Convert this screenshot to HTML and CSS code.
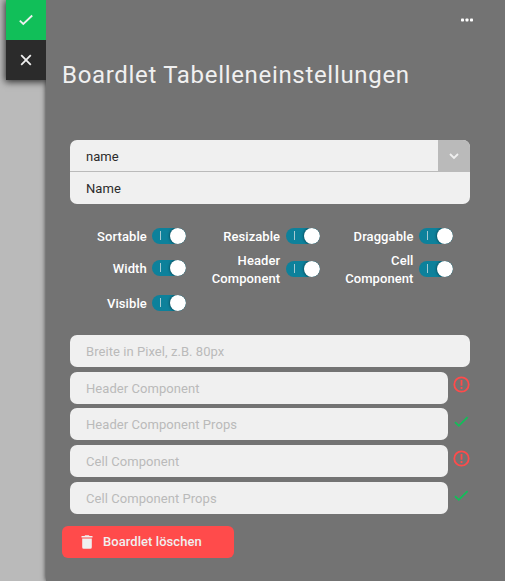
FILE: index.html
```html
<!DOCTYPE html>
<html lang="de">
<head>
<meta charset="utf-8">
<title>Boardlet Tabelleneinstellungen</title>
<link rel="stylesheet" href="styles.css">
</head>
<body>
<div class="layout">
  <nav class="rail">
    <div class="rail-actions">
      <button class="rail-button confirm" aria-label="OK"><svg width="20" height="20" viewBox="0 0 20 20"><path d="M3.8 10.6 7.3 14 16.2 5.5"/></svg></button>
      <button class="rail-button cancel" aria-label="Abbrechen"><svg width="20" height="20" viewBox="0 0 20 20"><path d="M5.2 5.2 14.8 14.8M14.8 5.2 5.2 14.8"/></svg></button>
    </div>
  </nav>
  <main class="panel">
    <div class="menu"><svg width="14" height="4" viewBox="0 0 14 4"><rect x="1" y="0.5" width="3" height="3" rx=".8"/><rect x="5.5" y="0.5" width="3" height="3" rx=".8"/><rect x="10" y="0.5" width="3" height="3" rx=".8"/></svg></div>
    <h1 class="title">Boardlet Tabelleneinstellungen</h1>
    <div class="content">
      <div class="column-select">
        <div class="select"><span class="select-value">name</span><span class="select-arrow"><svg width="12" height="12" viewBox="0 0 12 12"><path d="M2 4 6 8 10 4"/></svg></span></div>
        <div class="select-label">Name</div>
      </div>
      <div class="switches">
        <label class="switch"><span class="switch-text">Sortable</span><span class="track"><i class="knob"></i></span></label>
        <label class="switch"><span class="switch-text">Resizable</span><span class="track"><i class="knob"></i></span></label>
        <label class="switch"><span class="switch-text">Draggable</span><span class="track"><i class="knob"></i></span></label>
        <label class="switch"><span class="switch-text">Width</span><span class="track"><i class="knob"></i></span></label>
        <label class="switch tall"><span class="switch-text">Header Component</span><span class="track"><i class="knob"></i></span></label>
        <label class="switch tall"><span class="switch-text">Cell Component</span><span class="track"><i class="knob"></i></span></label>
        <label class="switch"><span class="switch-text">Visible</span><span class="track"><i class="knob"></i></span></label>
      </div>
      <div class="fields">
        <div class="field"><input class="input" placeholder="Breite in Pixel, z.B. 80px"></div>
        <div class="field compact"><input class="input" placeholder="Header Component"><svg class="status error" viewBox="0 0 17 17"><circle cx="8.5" cy="8.5" r="7.2"/><path d="M8.5 4V9.8M8.5 11V13"/></svg></div>
        <div class="field"><input class="input" placeholder="Header Component Props"><svg class="status valid" viewBox="0 0 17 17"><path d="M2 9.2 5.8 12.8 14.6 4.2"/></svg></div>
        <div class="field"><input class="input" placeholder="Cell Component"><svg class="status error" viewBox="0 0 17 17"><circle cx="8.5" cy="8.5" r="7.2"/><path d="M8.5 4V9.8M8.5 11V13"/></svg></div>
        <div class="field"><input class="input" placeholder="Cell Component Props"><svg class="status valid" viewBox="0 0 17 17"><path d="M2 9.2 5.8 12.8 14.6 4.2"/></svg></div>
      </div>
    </div>
    <button class="delete"><svg width="12" height="14" viewBox="0 0 12 14"><path d="M.5 1H3.5L4.2.2H7.8L8.5 1H11.5V2.5H.5ZM1.2 3.5H10.8V12.2Q10.8 13.7 9.3 13.7H2.7Q1.2 13.7 1.2 12.2Z"/></svg><span>Boardlet löschen</span></button>
  </main>
</div>
</body>
</html>
```

FILE: styles.css
```css
* { box-sizing: border-box; }

body {
  margin: 0;
  background: #bababa;
  color: #f0f0f0;
  font: 400 13px/18px Roboto, sans-serif;
  letter-spacing: 0.06px;
  overflow: hidden;
}

button {
  border: 0;
  font: inherit;
  letter-spacing: inherit;
  color: inherit;
}

svg { display: block; flex: none; }

.layout { display: flex; height: 581px; }

.rail { position: relative; width: 46px; padding-left: 6px; }

.rail-actions {
  position: relative;
  z-index: 1;
  box-shadow: 0 1px 7px 1px rgba(0, 0, 0, .75);
  clip-path: inset(0 0 -14px -14px);
}

.rail-button {
  display: flex;
  align-items: center;
  justify-content: center;
  width: 40px;
  height: 40px;
  padding: 0;
}

.rail-button path { fill: none; stroke: #f0f0f0; stroke-width: 1.8; }
.confirm { background: #11bf59; }
.cancel { background: #2b2b2b; }

.panel {
  flex: 1;
  padding: 0 35px 0 16px;
  background: #737373;
  box-shadow: 0 0 5px 0 rgba(0, 0, 0, .8);
}

.menu { display: flex; justify-content: flex-end; padding: 18px 0 0; margin-right: -4px; height: 58px; }
.menu rect { fill: #fff; }

.title {
  margin: 0;
  font-size: 24px;
  line-height: 34px;
  font-weight: 400;
  letter-spacing: 0.68px;
  white-space: nowrap;
}

.content { padding: 48px 0 0 8px; }

.column-select {
  height: 64px;
  overflow: hidden;
  border-radius: 7px;
  background: #f0f0f0;
  color: #2b2b2b;
}

.select {
  display: flex;
  height: 32px;
  background: linear-gradient(#bababa, #bababa) bottom / 100% 1px no-repeat;
}
.select-value { flex: 1; padding: 8px 16px 0; }
.select-arrow {
  display: flex;
  align-items: center;
  justify-content: center;
  width: 32px;
  background: #bababa;
}
.select-arrow path { fill: none; stroke: #f0f0f0; stroke-width: 1.8; }
.select-label { padding: 8px 16px 6px; }

.switches {
  display: grid;
  grid-template-columns: repeat(3, 1fr);
  grid-template-rows: 32px 35px 32px;
  padding-top: 16px;
}

.switch {
  display: flex;
  align-items: center;
  justify-content: flex-end;
  height: 32px;
  padding-right: 17px;
  gap: 5.5px;
  text-align: right;
  font-weight: 500;
  letter-spacing: 0.08px;
  color: #fff;
}
.switch-text { padding-top: 1px; }
.switch.tall { height: 34px; }
.switch.tall .switch-text { width: 75px; padding-top: 2px; }

.track {
  display: flex;
  flex: none;
  width: 34px;
  height: 16px;
  justify-content: space-between;
  border-radius: 8px;
  background: #0d819b;
  overflow: hidden;
}
.track::before {
  content: "";
  width: 1px;
  height: 9px;
  margin: 3px 0 0 8px;
  background: #a6c9d2;
}
.knob {
  width: 16px;
  height: 16px;
  border-radius: 50%;
  background: #fff;
  box-shadow: 0 0 3px rgba(0, 0, 0, .7);
}

.fields { display: grid; row-gap: 5px; padding-top: 16px; }
.field { display: flex; height: 32px; gap: 5px; }
.field.compact { margin-bottom: -1px; }

.input {
  flex: 1;
  min-width: 0;
  height: 32px;
  padding: 0 16px;
  border: 0;
  border-radius: 7px;
  background: #f0f0f0;
  font: inherit;
  letter-spacing: inherit;
}
.input::placeholder { color: #bababa; opacity: 1; }

.status { width: 17px; height: 17px; margin-top: 5px; }
.compact .status { margin-top: 4px; }
.status path, .status circle { fill: none; stroke-width: 1.8; }
.error { stroke: #ff4b4b; }
.valid { stroke: #11bf59; }

.delete {
  display: flex;
  align-items: center;
  width: 172px;
  height: 32px;
  margin-top: 12px;
  padding: 0 19px;
  gap: 10px;
  border-radius: 6px;
  background: #ff4b4b;
  font-weight: 500;
  letter-spacing: 0.06px;
}
.delete path { fill: #f0f0f0; }
```
